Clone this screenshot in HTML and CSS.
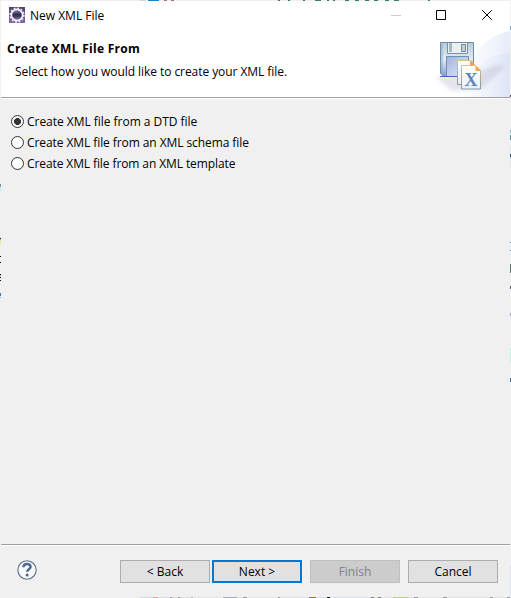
FILE: index.html
```html
<!DOCTYPE html>
<html lang="en">
<head>
<meta charset="utf-8">
<title>New XML File</title>
<link rel="stylesheet" href="styles.css">
</head>
<body>
<div class="desktop">
<main class="dialog">
  <header class="titlebar">
    <svg class="app-icon" width="16" height="16" viewBox="0 0 16 16">
      <defs><linearGradient id="app" x2="0" y2="1"><stop stop-color="#51406f"/><stop offset="1" stop-color="#8068a8"/></linearGradient><linearGradient id="core" x2="0" y2="1"><stop stop-color="#8a80ab"/><stop offset=".5" stop-color="#39325a"/><stop offset="1" stop-color="#8378a0"/></linearGradient></defs>
      <path fill="url(#app)" d="M0 0h16v16H0z"/>
      <circle cx="8" cy="8" r="6.9" fill="none" stroke="#e6e2ec" stroke-width="1.6" stroke-dasharray="1.9 1.71"/>
      <circle cx="8" cy="8" r="5.6" fill="url(#core)" stroke="#f4f2f6" stroke-width="1.7"/>
      <path d="M3.8 7h8.4M3.8 9h8.4" stroke="#29264d" stroke-width=".7"/>
    </svg>
    <span class="window-title">New XML File</span>
    <div class="window-controls">
      <svg width="10" height="10" viewBox="0 0 10 10"><path d="M0 5.5h10" stroke="#ccc"/></svg>
      <svg width="10" height="10" viewBox="0 0 10 10"><path d="M.5.5h9v9h-9z" fill="none" stroke="#000"/></svg>
      <svg width="10" height="10" viewBox="0 0 10 10"><path d="m.3.3 9.4 9.4m0-9.4L.3 9.7" stroke="#000"/></svg>
    </div>
  </header>
  <section class="banner">
    <div class="banner-copy">
      <h1><span class="heading">Create XML File From</span></h1>
      <p><span class="description">Select how you would like to create your XML file.</span></p>
    </div>
    <svg class="banner-art" width="75" height="66" viewBox="0 0 75 66">
      <defs>
        <linearGradient id="sweep"><stop stop-color="#fff"/><stop offset=".4" stop-color="#fafbfe"/><stop offset="1" stop-color="#e6ecf9"/></linearGradient>
        <linearGradient id="sweep2"><stop stop-color="#fff" stop-opacity="0"/><stop offset="1" stop-color="#dce4f6"/></linearGradient>
        <linearGradient id="disk" x2="0" y2="1"><stop stop-color="#b9cad8"/><stop offset=".5" stop-color="#e1eaf6"/><stop offset="1" stop-color="#829ed0"/></linearGradient>
        <linearGradient id="label" x2="1" y2="1"><stop stop-color="#9fb3dc"/><stop offset="1" stop-color="#e3ebf8"/></linearGradient>
        <linearGradient id="page" x2="0" y2="1"><stop stop-color="#fff"/><stop offset="1" stop-color="#e7eff4"/></linearGradient>
        <linearGradient id="edge" x2="0" y2="1"><stop stop-color="#e4bd78"/><stop offset="1" stop-color="#819aa0"/></linearGradient>
        <filter id="soft"><feGaussianBlur stdDeviation="2"/></filter>
      </defs>
      <path fill="url(#sweep)" d="M16 66C27 29 50 4 75 0v66z"/>
      <path fill="url(#sweep2)" d="M20 66C33 37 54 23 75 22v44z"/>
      <path d="M0 46 33 44 59 35 71 34 47 57 17 60z" fill="#83769d" opacity=".2" filter="url(#soft)"/>
      <path d="M5.5 11.5h33v34H9l-3.5-3z" fill="url(#disk)" stroke="#6d8da2"/>
      <path d="M7 13v28l2 3" fill="none" stroke="#8eabc8"/>
      <path d="M12.5 12v10.5h20V12" fill="#e9f0f2" stroke="#78949f"/>
      <path d="M14 12h3v9h-3z" fill="#a4b8c4"/>
      <path d="M26.5 13.5h4v7h-4z" fill="#c2cfd5" stroke="#6e8994"/>
      <path d="M11.5 45V25.5h22V45" fill="url(#label)" stroke="#6f8fb3"/>
      <path d="M5 45.5h23" stroke="#4467a8"/>
      <path d="M22.5 29.5h13l4 4v20h-17z" fill="url(#page)" stroke="url(#edge)"/>
      <path d="M35 29.5 40 34h-5z" fill="#eda34e"/>
      <path d="M26.5 34.5h14l5 5v18.500h-19z" fill="url(#page)" stroke="url(#edge)"/>
      <path d="M40.500 34.500v5.500h5.500z" fill="#f3a64f"/>
      <text x="36" y="55" text-anchor="middle" class="x-letter">X</text>
    </svg>
  </section>
  <form class="options">
    <label><input type="radio" name="source" checked><span class="option-one">Create XML file from a DTD file</span></label>
    <label><input type="radio" name="source"><span class="option-two">Create XML file from an XML schema file</span></label>
    <label><input type="radio" name="source"><span class="option-three">Create XML file from an XML template</span></label>
  </form>
  <footer class="actions">
    <svg class="help" width="20" height="20" viewBox="0 0 20 20"><circle cx="10" cy="10" r="9.2" fill="#f7f8fa" stroke="#5d708f" stroke-width="1.1"/><path d="M6.4 7.300C6.500 3 14 3.100 13.500 7.100c-.3 2.200-3.300 2.200-3.300 4.700" fill="none" stroke="#52698f" stroke-width="2.500"/><circle cx="10.100" cy="15" r="1.500" fill="#52698f"/></svg>
    <button>&lt; Back</button><button class="default">Next &gt;</button><button class="finish" disabled>Finish</button><button class="cancel">Cancel</button>
  </footer>
</main>
</div>
</body>
</html>
```

FILE: styles.css
```css
* { box-sizing: border-box; }
html, body { margin: 0; width: 511px; height: 598px; overflow: hidden; }
body { font: 12px/16px "Open Sans", "Noto Sans", sans-serif; color: #000; }
.desktop {
  width: 511px; height: 598px; padding: 1px;
  background:
    linear-gradient(90deg, transparent 140px, #cdd1e5 140px 146px, #fff 146px 148px, #1685cf 148px 159px, transparent 159px 164px, #977 164px 167px, transparent 167px 171px, #977 171px 174px, transparent 174px 278px, #387f67 278px 280px, transparent 280px 288px, #387f67 288px 290px, transparent 290px 303px, #387f67 303px 305px, transparent 305px 315px, #387f67 315px 321px, transparent 321px 327px, #387f67 327px 329px, transparent 329px 333px, #387f67 333px 335px, transparent 335px 345px, #387f67 345px 349px, transparent 349px 355px, #387f67 355px 359px, transparent 359px 365px, #387f67 365px 369px, transparent 369px 374px, #387f67 374px 378px, transparent 378px 385px, #387f67 385px 389px, transparent 389px 394px, #387f67 394px 399px, transparent 399px 428px, #387f67 428px 430px, transparent 430px) 0 0 / 511px 1px no-repeat,
    linear-gradient(transparent 184px, #a77532 184px 185px, #4bb9d2 185px 187px, #c3eeee 187px 191px, transparent 191px 238px, #111 238px 239px, #e8ad5c 239px 240px, #efeb9c 240px 245px, transparent 245px 256px, #111 256px 257px, transparent 257px 262px, #111 262px 263px, transparent 263px 274px, #111 274px 275px, #78adc9 275px 276px, transparent 276px 277px, #111 277px 278px, transparent 278px 280px, #111 280px 281px, transparent 281px 293px, #267fc7 293px 296px, transparent 296px 297px, #82bce1 297px 298px, transparent 298px) 0 0 / 1px 598px no-repeat,
    linear-gradient(transparent 26px, #68bfe0 26px 30px, transparent 30px 95px, #750e6c 95px 97px, transparent 97px 130px, #75c4cb 130px 133px, transparent 133px 135px, #478f99 135px 140px, transparent 140px 146px, #dce3ed 146px 154px, #174b86 154px 157px, #dce3ed 157px 168px, transparent 168px 242px, #4b7794 242px 243px, transparent 243px 250px, #4b7794 250px 251px, transparent 251px 264px, #587b6a 264px 273px, transparent 273px 286px, #68518c 286px 289px, transparent 289px 313px, #9ba9d0 313px 316px, transparent 316px 348px, #bcefe9 348px 362px, transparent 362px 378px, #337abd 378px 382px, transparent 382px 565px, #dce2ef 565px) 510px 0 / 1px 598px no-repeat,
    linear-gradient(90deg, transparent 140px, #d4d7e5 140px 153px, #e5a0a5 153px 158px, #d7dbe7 158px 170px, #999 170px 172px, #ddd 172px 178px, #999 178px 180px, #ddd 180px 191px, #b1b8ca 191px 193px, #e6e6e6 193px 223px, #a5aab8 223px 237px, #e2e2e2 237px 243px, #999 243px 247px, #e6e6e6 247px 278px, #999 278px 280px, #e0e0e0 280px 301px, #d9dfec 301px 309px, #777 309px 311px, #a07a20 311px 316px, #d9dfec 316px 327px, #111 327px 330px, #d9dfec 330px 371px, #777 371px 374px, #ddd 374px 378px, #777 378px 381px, #e2e2e2 381px 393px, #b9cf83 393px 408px, #ddd 408px 414px, #999 414px 418px, #e6e6e6 418px 443px, #999 443px 447px, #e2e2e2 447px 490px, #999 490px 493px, #e2e2e2 493px 507px, #999 507px) 0 597px / 511px 1px no-repeat,
    #f0f0f0;
}
.dialog { width: 509px; height: 596px; display: flex; flex-direction: column; background: #f0f0f0; }
.titlebar { height: 30px; flex-shrink: 0; display: flex; align-items: center; background: #fff; padding: 0 18px 0 8px; }
.app-icon { margin-right: 5px; margin-top: -2px; }
.window-controls { margin-left: auto; display: flex; gap: 36px; margin-top: -2px; }
.window-controls svg { display: block; }
.window-controls svg:first-child { margin-right: -1px; }
.banner { height: 67px; flex-shrink: 0; display: flex; background: #fff; border-bottom: 1px solid #a0a0a0; }
.banner-copy { flex: 1; padding: 9px 0 0 6px; }
.banner-art { display: block; flex: none; }
h1 { margin: 0; font-size: 12px; line-height: 18px; letter-spacing: .28px; }
p { margin: 6px 0 0 8px; white-space: nowrap; }
.window-title, .heading, .description, .option-one, .option-two, .option-three { white-space: nowrap; }
.description { letter-spacing: -.06px; }
.option-one { letter-spacing: -.03px; }
.option-two { letter-spacing: -.08px; }
.option-three { letter-spacing: -.1px; }
.x-letter { font: bold 18px "Liberation Serif", serif; fill: #5e87b5; }
.options { flex: 1; border-top: 1px solid #fff; padding: 12px 10px; }
label { display: flex; align-items: center; height: 21px; }
input { appearance: none; flex: none; width: 13px; height: 13px; border: 1px solid #333; border-radius: 50%; margin: 0 3px 0 0; background: #fff; }
input:checked { background: radial-gradient(circle, #333 0 3.2px, #fff 3.8px); }
.actions { height: 53px; flex-shrink: 0; border-top: 1px solid #a0a0a0; box-shadow: inset 0 1px #fff; display: flex; align-items: flex-start; padding: 15px 12px 0 16px; }
.help { margin-right: auto; }
button { width: 90px; height: 23px; margin: 0; padding: 0; border: 1px solid #adadad; background: #e1e1e1; font: inherit; color: #000; border-radius: 0; }
.default { border: 2px solid #0078d7; margin-left: 2px; }
.finish { margin-left: 8px; background: #ccc; border-color: #bfbfbf; color: #838383; }
.cancel { margin-left: 8px; }
```
